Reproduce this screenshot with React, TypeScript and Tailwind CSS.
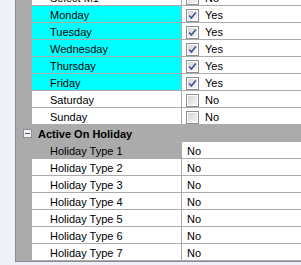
import React from "react";

const LINE = "border-[#ababab]";

function CheckBox({ checked }: { checked: boolean }) {
  return (
    <svg width="13" height="13" viewBox="0 0 13 13" className="shrink-0">
      <defs>
        <linearGradient id={checked ? "cbg1" : "cbg0"} x1="0" y1="0" x2="1" y2="1">
          <stop offset="0" stopColor="#d6d6d6" />
          <stop offset="1" stopColor="#f6f6f6" />
        </linearGradient>
      </defs>
      <rect x="0.5" y="0.5" width="12" height="12" fill="#ffffff" stroke="#8f8f8f" />
      <rect x="2" y="2" width="9" height="9" fill={`url(#${checked ? "cbg1" : "cbg0"})`} />
      {checked && (
        <path d="M3.2 6.4 L5.4 9 L9.8 3.4" fill="none" stroke="#3d5497" strokeWidth="1.6" />
      )}
    </svg>
  );
}

type Row = {
  name: string;
  value: string;
  check?: boolean;
  hl?: "cyan" | "sel";
};

function PropRow({ row }: { row: Row }) {
  const nameBg =
    row.hl === "cyan" ? "bg-[#00ffff]" : row.hl === "sel" ? "bg-[#ababab]" : "bg-white";
  return (
    <div className="flex h-[17px]">
      <div className="w-[16px] shrink-0 bg-[#ababab]" />
      <div
        className={`w-[150px] shrink-0 border-b border-r ${LINE} ${nameBg} pl-[18px] leading-[16px] pt-px whitespace-nowrap overflow-hidden`}
      >
        {row.name}
      </div>
      <div className={`flex-1 border-b ${LINE} bg-white flex items-start whitespace-nowrap`}>
        {row.check !== undefined ? (
          <div className="flex items-start pl-[4px] pt-[3px] gap-[6px]">
            <CheckBox checked={row.check} />
            <span className="leading-[16px] -mt-[2px]">{row.value}</span>
          </div>
        ) : (
          <span className="pl-[5px] leading-[16px] pt-px">{row.value}</span>
        )}
      </div>
    </div>
  );
}

const days: Row[] = [
  { name: "Select M1", value: "No", check: false },
  { name: "Monday", value: "Yes", check: true, hl: "cyan" },
  { name: "Tuesday", value: "Yes", check: true, hl: "cyan" },
  { name: "Wednesday", value: "Yes", check: true, hl: "cyan" },
  { name: "Thursday", value: "Yes", check: true, hl: "cyan" },
  { name: "Friday", value: "Yes", check: true, hl: "cyan" },
  { name: "Saturday", value: "No", check: false },
  { name: "Sunday", value: "No", check: false },
];

const holidays: Row[] = [1, 2, 3, 4, 5, 6, 7].map((n) => ({
  name: `Holiday Type ${n}`,
  value: "No",
  hl: n === 1 ? "sel" : undefined,
}));

export default function App() {
  return (
    <div
      className="w-[301px] h-[265px] bg-[#eef1f8] overflow-hidden pl-[15px] text-[11px] text-black"
      style={{ fontFamily: '"Liberation Sans", Arial, sans-serif' }}
    >
      <div className="h-[262px] border-l border-b border-[#8a8c8f] overflow-hidden bg-white">
        <div className="-mt-[11px]">
          {days.map((r) => (
            <PropRow key={r.name} row={r} />
          ))}
          {/* Category */}
          <div className="flex items-center h-[17px] bg-[#ababab]">
            <div className="w-[16px] shrink-0 flex justify-end pr-[-1px]">
              <svg width="9" height="9" viewBox="0 0 9 9" className="ml-[5px]">
                <rect x="0.5" y="0.5" width="8" height="8" fill="#f2f2f2" stroke="#8f8f8f" />
                <path d="M2 4.5 H7" stroke="#4a5a8a" strokeWidth="1" />
              </svg>
            </div>
            <span className="pl-[6px] font-bold leading-[16px] pt-px">Active On Holiday</span>
          </div>
          {holidays.map((r) => (
            <PropRow key={r.name} row={r} />
          ))}
        </div>
      </div>
    </div>
  );
}
